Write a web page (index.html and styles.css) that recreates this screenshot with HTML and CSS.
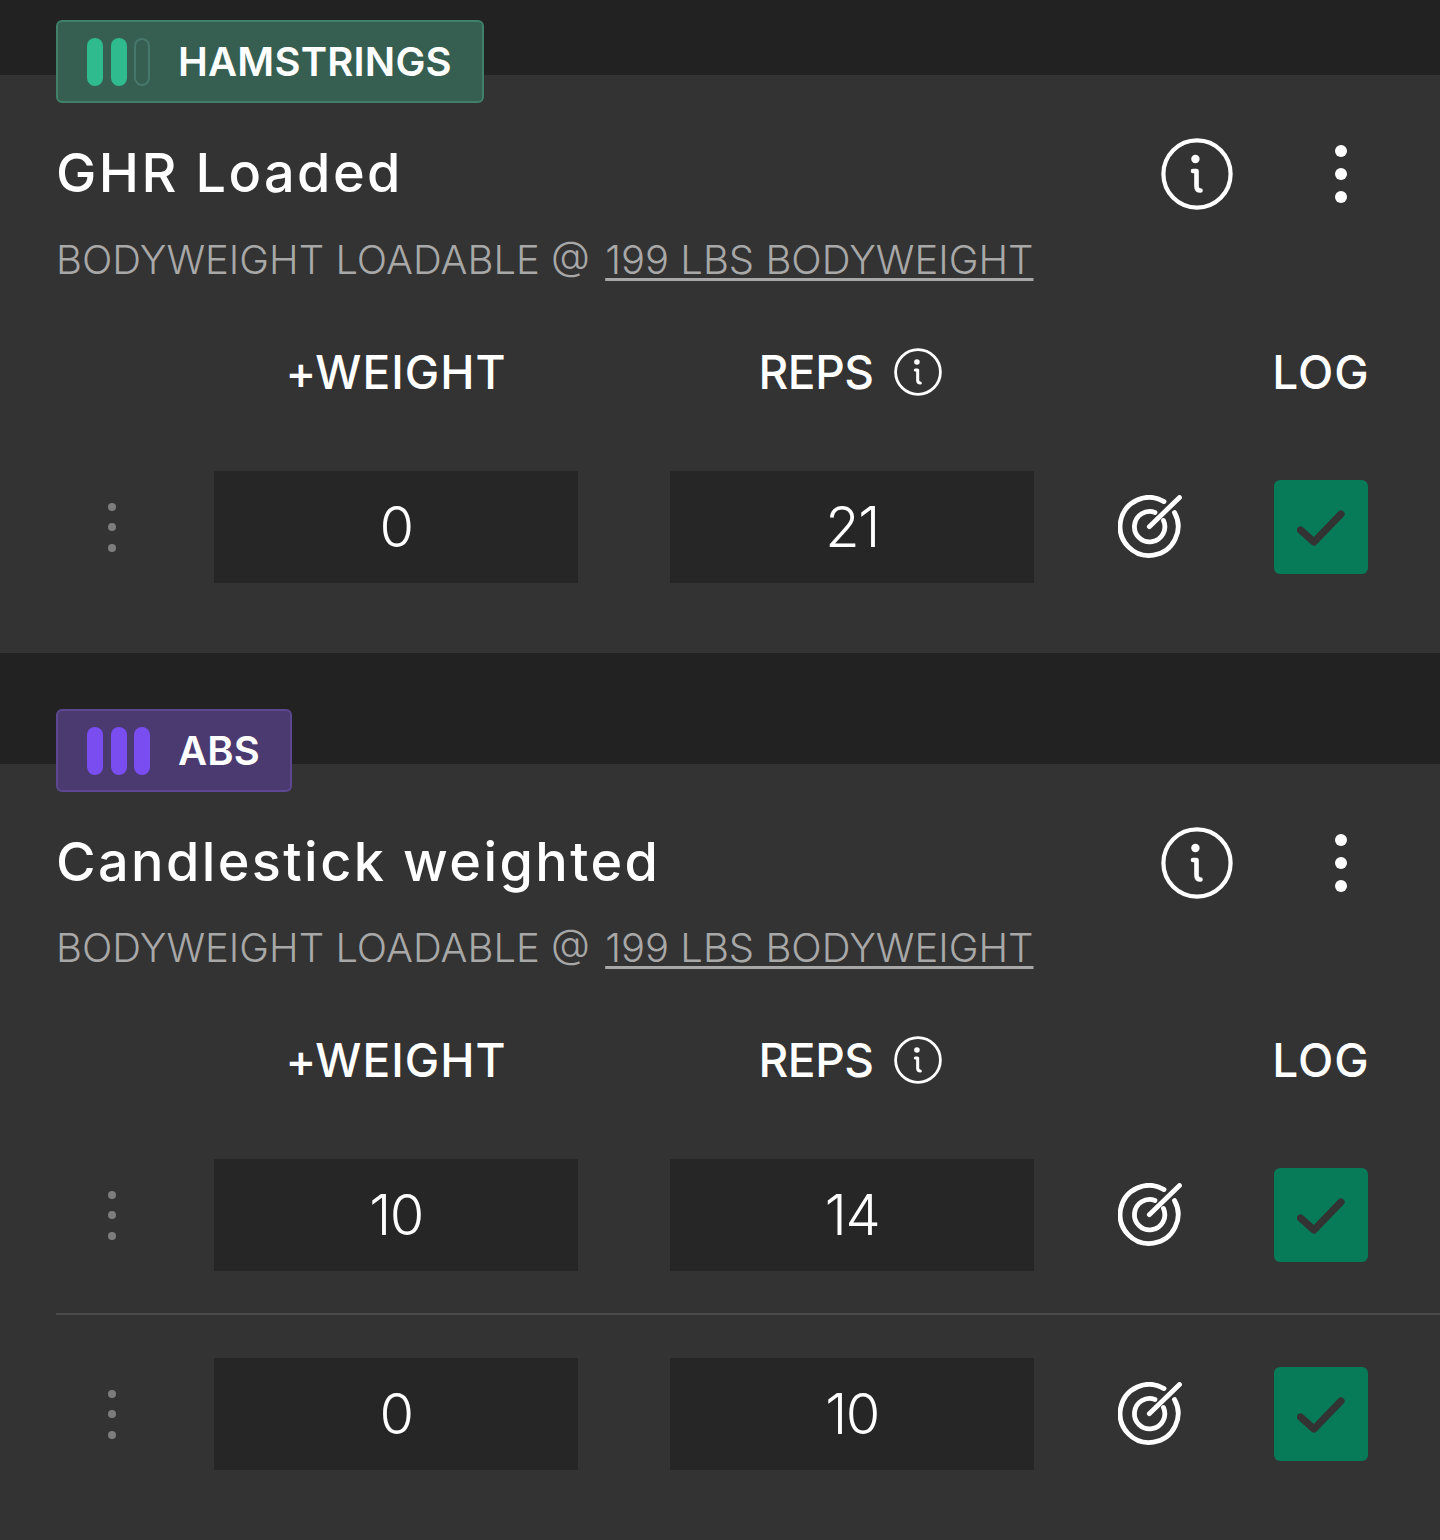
FILE: index.html
```html
<!DOCTYPE html>
<html lang="en">
<head>
    <meta charset="UTF-8">
    <title>Workout</title>
    <link rel="stylesheet" href="styles.css">
</head>
<body>
    <svg class="defs" width="0" height="0">
        <symbol id="ico_info" viewBox="0 0 72 72">
            <circle cx="36" cy="36" r="33.6" fill="none" stroke="currentColor" stroke-width="4.2"/>
            <circle cx="34.4" cy="21" r="4.2" fill="currentColor"/>
            <path d="M32 33 H35.5 V48.5 Q35.5 52.5 39.5 52.5" fill="none" stroke="currentColor" stroke-width="4.6" stroke-linecap="round" stroke-linejoin="round"/>
        </symbol>
        <symbol id="ico_target" viewBox="0 0 64 64">
            <path d="M56.5 17.5 A29 29 0 1 1 46 6.6" fill="none" stroke="currentColor" stroke-width="4.8" stroke-linecap="round"/>
            <path d="M45.5 25.5 A15.2 15.2 0 1 1 37 17.5" fill="none" stroke="currentColor" stroke-width="4.8" stroke-linecap="round"/>
            <path d="M31.3 31.7 L61.5 2.5" fill="none" stroke="currentColor" stroke-width="4.8" stroke-linecap="round"/>
        </symbol>
        <symbol id="ico_check" viewBox="0 0 48 40">
            <path d="M3.5 23 L17 35 L44 7" fill="none" stroke="currentColor" stroke-width="7.2" stroke-linecap="round" stroke-linejoin="round"/>
        </symbol>
    </svg>

    <section class="card first">
        <div class="badge green">
            <span class="bars"><i></i><i></i><i class="empty"></i></span>
            <span>HAMSTRINGS</span>
        </div>
        <div class="title_row">
            <h2>GHR Loaded</h2>
            <svg class="info_big"><use href="#ico_info"/></svg>
            <span class="dots"><i></i><i></i><i></i></span>
        </div>
        <p class="sub">BODYWEIGHT LOADABLE @ <u>199 LBS BODYWEIGHT</u></p>
        <div class="grid head">
            <span></span>
            <span class="col">+WEIGHT</span>
            <span class="col reps">REPS <svg class="info_small"><use href="#ico_info"/></svg></span>
            <span></span>
            <span class="col">LOG</span>
        </div>
        <div class="grid row">
            <span class="handle"><i></i><i></i><i></i></span>
            <div class="input">0</div>
            <div class="input">21</div>
            <svg class="target"><use href="#ico_target"/></svg>
            <div class="check"><svg><use href="#ico_check"/></svg></div>
        </div>
    </section>

    <section class="card">
        <div class="badge purple">
            <span class="bars"><i></i><i></i><i></i></span>
            <span>ABS</span>
        </div>
        <div class="title_row">
            <h2>Candlestick weighted</h2>
            <svg class="info_big"><use href="#ico_info"/></svg>
            <span class="dots"><i></i><i></i><i></i></span>
        </div>
        <p class="sub">BODYWEIGHT LOADABLE @ <u>199 LBS BODYWEIGHT</u></p>
        <div class="grid head">
            <span></span>
            <span class="col">+WEIGHT</span>
            <span class="col reps">REPS <svg class="info_small"><use href="#ico_info"/></svg></span>
            <span></span>
            <span class="col">LOG</span>
        </div>
        <div class="grid row">
            <span class="handle"><i></i><i></i><i></i></span>
            <div class="input">10</div>
            <div class="input">14</div>
            <svg class="target"><use href="#ico_target"/></svg>
            <div class="check"><svg><use href="#ico_check"/></svg></div>
        </div>
        <div class="grid row divided">
            <span class="handle"><i></i><i></i><i></i></span>
            <div class="input">0</div>
            <div class="input">10</div>
            <svg class="target"><use href="#ico_target"/></svg>
            <div class="check"><svg><use href="#ico_check"/></svg></div>
        </div>
    </section>
</body>
</html>
```

FILE: styles.css
```css
* {
    margin: 0;
    padding: 0;
    box-sizing: border-box;
}

body {
    height: 1540px;
    overflow: hidden;
    background-color: #222222;
    color: #ffffff;
    font-family: Inter, "Noto Sans", sans-serif;
}

.defs {
    position: absolute;
}

.card {
    display: flow-root;
    margin-top: 111px;
    padding-left: 56px;
    padding-bottom: 70px;
    background-color: #333333;
}

.card.first {
    margin-top: 75px;
}

.badge {
    display: flex;
    align-items: center;
    gap: 28px;
    width: fit-content;
    height: 83px;
    margin-top: -55px;
    padding: 0 30px 0 29px;
    border: 2px solid;
    border-radius: 6px;
    font-size: 40px;
    font-weight: 600;
    letter-spacing: 0.2px;
}

.badge.green {
    background-color: #365f52;
    border-color: #3f8068;
}

.badge.purple {
    background-color: #4a3a70;
    border-color: #5c4790;
}

.bars {
    display: flex;
    gap: 7.5px;
}

.bars i {
    width: 16px;
    height: 48px;
    border-radius: 8px;
}

.green .bars i {
    background-color: #2fbb8e;
}

.green .bars i.empty {
    background-color: transparent;
    border: 2px solid #47776a;
}

.purple .bars i {
    background-color: #7a4df0;
}

.title_row {
    display: flex;
    align-items: center;
    height: 72px;
    margin-top: 35px;
    padding-right: 99px;
}

h2 {
    flex: 1;
    padding-bottom: 3px;
    font-size: 54px;
    font-weight: 500;
    letter-spacing: 2.4px;
}

.info_big {
    width: 72px;
    height: 72px;
    color: #ffffff;
}

.dots {
    display: flex;
    flex-direction: column;
    align-items: center;
    gap: 11px;
    margin-left: 102px;
    margin-right: -6px;
}

.dots i {
    width: 12px;
    height: 12px;
    border-radius: 50%;
    background-color: #ffffff;
}

.sub {
    margin-top: 24px;
    font-size: 40px;
    line-height: 52px;
    font-weight: 300;
    letter-spacing: 0;
    color: #a8a8a8;
}

.card + .card .sub {
    margin-top: 23px;
}

.sub u {
    margin-left: 4px;
    text-underline-offset: 4px;
    text-decoration-thickness: 3px;
}

.grid {
    display: grid;
    grid-template-columns: 66px 364px 364px 56px 94px;
    column-gap: 92px;
    align-items: center;
    padding-right: 72px;
}

.head {
    height: 60px;
    margin-top: 56px;
    font-size: 46px;
    font-weight: 500;
    letter-spacing: 1px;
}

.col {
    display: flex;
    align-items: center;
    justify-content: center;
    gap: 20px;
    white-space: nowrap;
}

.col.reps {
    padding-right: 4px;
    letter-spacing: -0.4px;
}

.info_small {
    width: 48px;
    height: 48px;
}

.row {
    height: 112px;
    margin-top: 69px;
}

.row.divided {
    height: 157px;
    margin-top: 42px;
    padding-top: 43px;
    border-top: 2px solid #4a4a4a;
}

.input {
    height: 112px;
    display: flex;
    align-items: center;
    justify-content: center;
    background-color: #262626;
    font-size: 56px;
    font-weight: 300;
    letter-spacing: -1.5px;
}

.handle {
    display: flex;
    flex-direction: column;
    align-items: center;
    gap: 12.5px;
    width: 112px;
}

.handle i {
    width: 8px;
    height: 8px;
    border-radius: 50%;
    background-color: #7d7d7d;
}

.target {
    width: 64px;
    height: 64px;
    margin-left: -8px;
    color: #ffffff;
}

.check {
    width: 94px;
    height: 94px;
    display: flex;
    align-items: center;
    justify-content: center;
    border-radius: 6px;
    background-color: #077a58;
    color: #333333;
}

.check svg {
    width: 48px;
    height: 40px;
}
```
